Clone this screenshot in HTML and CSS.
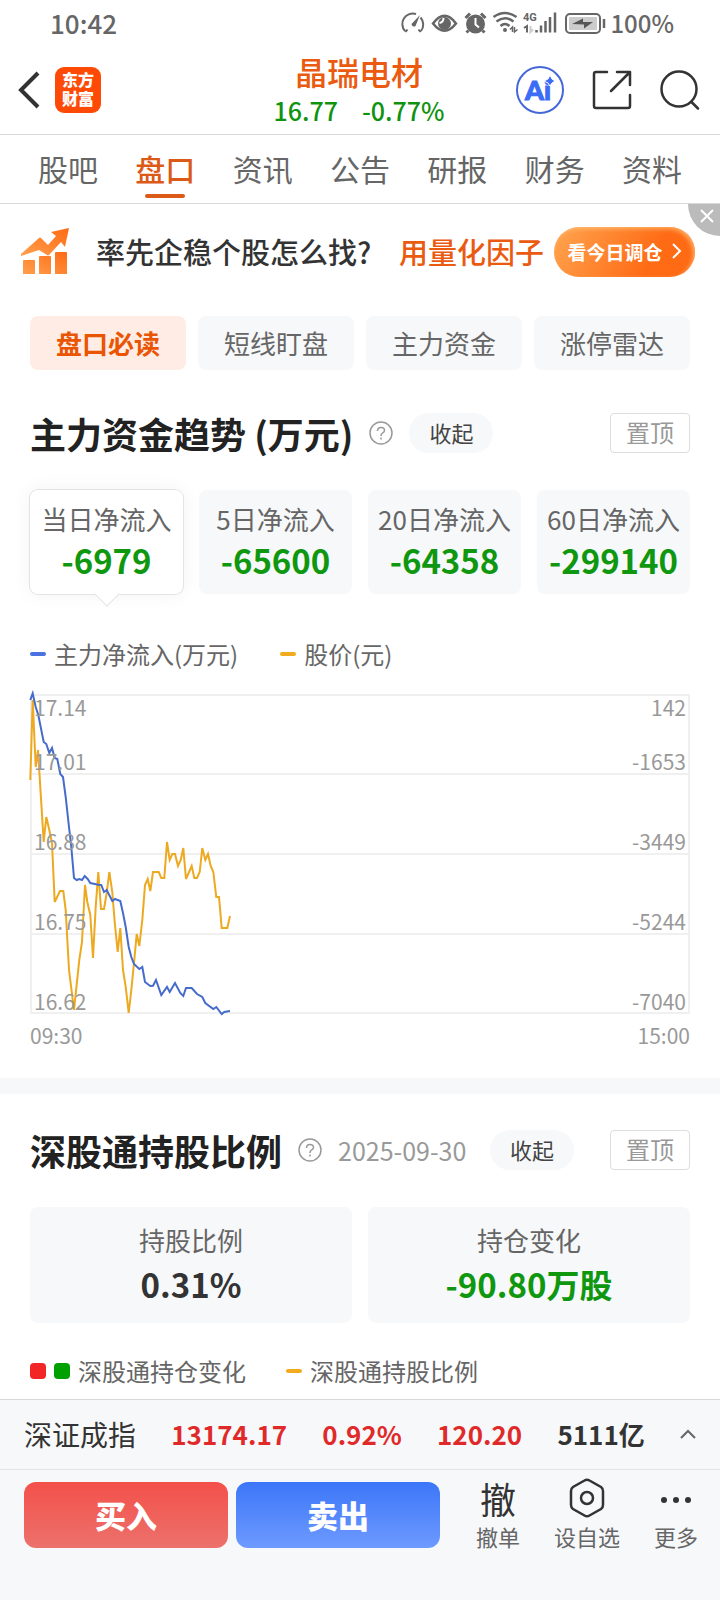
FILE: index.html
```html
<!DOCTYPE html>
<html lang="zh-CN">
<head>
<meta charset="utf-8">
<meta name="viewport" content="width=device-width">
<title>晶瑞电材 - 盘口</title>
<link rel="stylesheet" href="styles.css">
</head>

<body>

<div class="statusbar">
	<span>10:42</span>
	<div class="status-right">
		<svg width="206" height="24" viewBox="0 0 206 24" fill="none" stroke="#666" stroke-width="2">
			<!-- gauge -->
			<path d="M5.500 21 L7.500 18.500 M20.500 21 L18.500 18.500 M5 20 A10.500 10.500 0 0 1 16 3 M20.500 6.500 A10.500 10.500 0 0 1 21 20"/>
			<path d="M20 4 L15.500 15 A2.500 2.500 0 0 1 11.500 13 Z" fill="#666" stroke="none"/>
			<!-- eye -->
			<path d="M33 12.500 Q44.500 -3 56 12.500 Q44.500 27 33 12.500 Z" stroke-width="2.500"/>
			<circle cx="44.500" cy="12.500" r="6.500" fill="#666" stroke="none"/>
			<path d="M43.500 7 a5 5 0 0 1 -4 5" stroke="#fff"/>
			<!-- alarm -->
			<circle cx="75.500" cy="13" r="9.500" fill="#666" stroke="none"/>
			<path d="M65.500 7 L70 2.500 M81 2.500 L85.500 7 M68.500 19.500 L66.500 21.500 M82.500 19.500 L84.500 21.500" stroke-width="3"/>
			<path d="M75.500 7 V13.500 L79 16.500" stroke="#fff"/>
			<!-- wifi -->
			<path d="M93.500 6 Q105 -2 116.500 6 M96.500 10.500 Q105 4 113.500 10.500 M100.500 15 Q105 11 109.500 15" stroke-width="2.500"/>
			<circle cx="105" cy="19" r="2" fill="#666" stroke="none"/>
			<path d="M110 18.500 L112.500 16 V21 M114.500 16 V21 L117.500 18.500" stroke-width="1.500"/>
			<!-- mobile signal -->
			<text class="net-type" x="123" y="10">4G</text>
			<path d="M124 17 L127 15 V21.500"/>
			<path d="M130.500 15 V21 L133 18.500" stroke="#ccc"/>
			<path d="M136.500 19 V21.500 M141 14.500 V21.500 M145.500 10 V21.500 M150 6 V21.500 M155 1.500 V21.500" stroke-width="2.500"/>
			<!-- battery -->
			<rect x="166" y="3" width="34" height="19" rx="4"/>
			<rect x="169" y="6" width="28" height="13" rx="1" fill="#ccc" stroke="none"/>
			<path d="M172 13 L183 7.500 V11 H193 L184 17.500 V13.500 Z" fill="#555" stroke="none"/>
			<path d="M204 8 V17" stroke-width="2.500"/>
		</svg>
		<span>100%</span>
	</div>
</div>

<header class="header">
	<div class="header-left">
		<button type="button" class="icon-btn" aria-label="返回">
			<svg width="22" height="38" viewBox="0 0 22 38" fill="none" stroke="#333" stroke-width="4"><path d="M20 2 L3 19 L20 36"/></svg>
		</button>
		<a class="logo" href="#"><span>东方</span><span>财富</span></a>
	</div>
	<div class="stock">
		<h1>晶瑞电材</h1>
		<p><span>16.77</span><span>-0.77%</span></p>
	</div>
	<div class="header-right">
		<button type="button" class="icon-btn" aria-label="AI 助手">
			<svg width="48" height="48" viewBox="0 0 48 48">
				<circle cx="24" cy="24" r="23" fill="none" stroke="#4468d8" stroke-width="2"/>
				<text class="ai-text" x="9" y="34">Ai</text>
				<path d="M34 9 L36 13 L39 15 L36 17 L34 20 L32 17 L28 15 L32 13 Z" fill="#3b6cf6" stroke="#fff" stroke-width="1"/>
			</svg>
		</button>
		<button type="button" class="icon-btn" aria-label="分享">
			<svg width="40" height="40" viewBox="0 0 40 40" fill="none" stroke="#333" stroke-width="2.500" stroke-linecap="round" stroke-linejoin="round"><path d="M15 2 H4 Q2 2 2 4 V36 Q2 38 4 38 H36 Q38 38 38 36 V25 M25 2 H38 V15 M38 2 L19 21"/></svg>
		</button>
		<button type="button" class="icon-btn" aria-label="搜索">
			<svg width="40" height="40" viewBox="0 0 40 40" fill="none" stroke="#333" stroke-width="2.500" stroke-linecap="round"><circle cx="19" cy="19" r="17.500"/><path d="M31.500 32 L38 38.500"/></svg>
		</button>
	</div>
</header>

<nav class="tabs">
	<a href="#">股吧</a>
	<a href="#" class="active">盘口</a>
	<a href="#">资讯</a>
	<a href="#">公告</a>
	<a href="#">研报</a>
	<a href="#">财务</a>
	<a href="#">资料</a>
</nav>

<main>

<div class="banner">
	<svg width="50" height="48" viewBox="0 0 50 48">
		<defs><linearGradient id="rise" x1="0" y1="1" x2="1" y2="0"><stop offset="0" stop-color="#ffa04e"/><stop offset="1" stop-color="#ff6a14"/></linearGradient></defs>
		<path fill="url(#rise)" d="M1 26 L19 10 Q20 9 21 10 L28 17 L36 8 L31 4 L49 0 L45 19 L41 14 L29 27 Q28 28 27 27 L19 22 L1 28 Z"/>
		<path fill="url(#rise)" d="M4 32 H14 Q15 32 15 33 V46 H3 V33 Q3 32 4 32 Z M20 28 H30 Q31 28 31 29 V46 H19 V29 Q19 28 20 28 Z M36 24 H46 Q47 24 47 25 V46 H35 V25 Q35 24 36 24 Z"/>
	</svg>
	<p class="banner-text">率先企稳个股怎么找?</p>
	<p class="banner-text hot">用量化因子</p>
	<button type="button" class="banner-btn">看今日调仓
		<svg width="10" height="16" viewBox="0 0 10 16" fill="none" stroke="#fff" stroke-width="2"><path d="M1 1 L8 8 L1 15"/></svg>
	</button>
	<button type="button" class="banner-close" aria-label="关闭">
		<svg width="14" height="14" viewBox="0 0 14 14" stroke="#fff" stroke-width="2"><path d="M1 1 L13 13 M13 1 L1 13"/></svg>
	</button>
</div>

<div class="chips">
	<button type="button" class="active">盘口必读</button>
	<button type="button">短线盯盘</button>
	<button type="button">主力资金</button>
	<button type="button">涨停雷达</button>
</div>

<section class="block">
	<div class="block-head">
		<h2>主力资金趋势 (万元)</h2>
		<svg class="help" width="24" height="24" viewBox="0 0 24 24" fill="none" stroke="#999" stroke-width="1.500"><circle cx="12" cy="12" r="11"/><path d="M8.500 10 Q8.500 6.500 12 6.500 Q15.500 6.500 15.500 9.500 Q15.500 11 13.500 12.200 Q12 13 12 15 M12 16.500 V18.500"/></svg>
		<button type="button" class="pill">收起</button>
		<button type="button" class="pin">置顶</button>
	</div>

	<div class="flows">
		<button type="button" class="card active"><span>当日净流入</span><b class="down">-6979</b></button>
		<button type="button" class="card"><span>5日净流入</span><b class="down">-65600</b></button>
		<button type="button" class="card"><span>20日净流入</span><b class="down">-64358</b></button>
		<button type="button" class="card"><span>60日净流入</span><b class="down">-299140</b></button>
	</div>

	<div class="legend">
		<span><i class="dash blue"></i>主力净流入(万元)</span>
		<span><i class="dash amber"></i>股价(元)</span>
	</div>

	<svg class="chart" viewBox="0 0 660 358">
		<path class="grid" d="M1 5 H659 V323 H1 Z M1 84 H659 M1 164 H659 M1 244 H659"/>
		<polyline class="line amber" points="0.300,90 2.700,10 5.700,77 8,60 13.700,152 16.300,127 19.300,140 22,153 24.700,212 30,201 33.300,201 35.700,220 39,280 44,320 49.300,270 52,252 55,195 57.300,212 60.300,225 63,268 65.700,217 68.300,182 71,219 74,219 76.700,203 79.300,182 82.300,202 84.700,232 87.700,262 90.300,238 93,280 95.700,297 98.700,323 101.300,300 104,273 106.700,244 109.300,256 112.300,230 115,195 117.700,189 120.300,201 123,182 128.700,182 131.300,188 134.300,188 137,152 139.700,170 142.300,164 145,164 148,176 150.700,170 153.300,158 156,189 161.700,176 164.300,188 167,188 169.700,182 172.300,158 175.300,170 178,164 180.700,176 183.300,182 186.300,207 189,207 191.700,238 197.300,238 200,226"/>
		<polyline class="line blue" points="0.300,10 2.700,3.300 5.700,17 8.300,25 13.700,52 16.300,54 19.300,63 22,58 24.700,68 27.300,69 30.300,84 33,87 35.700,107 39,137 41.300,157 44,188 46.700,190 49.300,189 52,190 54.700,186 57.700,189 60.300,193 68.300,194.700 71.300,195 74,202 76.700,200 82.300,211 85,209 90.300,211 93,223 95.700,237 98.700,257 101.300,267 104,274 109.300,279 112.300,277 115,292 120.300,296 123,295.700 126,290 131.300,305 137,297 139.700,302 145,293 150.300,303 153.300,306 156,298 161.700,298 167,304 172.300,307 175.300,313 183.300,319 186.300,317 191.700,324 194.300,322 200,321"/>
		<g class="axis">
			<text x="4" y="26">17.14</text>
			<text x="4" y="80">17.01</text>
			<text x="4" y="160">16.88</text>
			<text x="4" y="240">16.75</text>
			<text x="4" y="320">16.62</text>
			<text x="0" y="354">09:30</text>
		</g>
		<g class="axis end">
			<text x="656" y="26">142</text>
			<text x="656" y="80">-1653</text>
			<text x="656" y="160">-3449</text>
			<text x="656" y="240">-5244</text>
			<text x="656" y="320">-7040</text>
			<text x="660" y="354">15:00</text>
		</g>
	</svg>
</section>

<section class="block last">
	<div class="block-head">
		<h2>深股通持股比例</h2>
		<svg class="help" width="24" height="24" viewBox="0 0 24 24" fill="none" stroke="#999" stroke-width="1.500"><circle cx="12" cy="12" r="11"/><path d="M8.500 10 Q8.500 6.500 12 6.500 Q15.500 6.500 15.500 9.500 Q15.500 11 13.500 12.200 Q12 13 12 15 M12 16.500 V18.500"/></svg>
		<time datetime="2025-09-30">2025-09-30</time>
		<button type="button" class="pill">收起</button>
		<button type="button" class="pin">置顶</button>
	</div>

	<div class="holdings">
		<div class="card"><span>持股比例</span><b>0.31%</b></div>
		<div class="card"><span>持仓变化</span><b class="down">-90.80万股</b></div>
	</div>

	<div class="legend wide">
		<span><i class="box red"></i><i class="box green"></i>深股通持仓变化</span>
		<span><i class="dash amber"></i>深股通持股比例</span>
	</div>
</section>

</main>

<footer class="footer">
	<div class="index-row">
		<span>深证成指</span>
		<b class="up">13174.17</b>
		<b class="up">0.92%</b>
		<b class="up">120.20</b>
		<b>5111亿</b>
		<svg width="16" height="10" viewBox="0 0 16 10" fill="none" stroke="#666" stroke-width="2"><path d="M1 9 L8 2 L15 9"/></svg>
	</div>
	<div class="trade-row">
		<button type="button" class="trade buy">买入</button>
		<button type="button" class="trade sell">卖出</button>
		<div class="tools">
			<button type="button" class="tool"><span class="glyph">撤</span>撤单</button>
			<button type="button" class="tool">
				<svg width="36" height="40" viewBox="0 0 36 40" fill="none" stroke="#333" stroke-width="2.500"><path d="M15.500 2.500 Q18 1 20.500 2.500 L32 9 Q34 10.500 34 13 V27 Q34 29.500 32 31 L20.500 37.500 Q18 39 15.500 37.500 L4 31 Q2 29.500 2 27 V13 Q2 10.500 4 9 Z"/><circle cx="18" cy="20" r="6"/></svg>
				设自选
			</button>
			<button type="button" class="tool">
				<svg width="36" height="40" viewBox="0 0 36 40" fill="#333"><circle cx="6" cy="22" r="3"/><circle cx="18" cy="22" r="3"/><circle cx="30" cy="22" r="3"/></svg>
				更多
			</button>
		</div>
	</div>
</footer>

</body>
</html>
```
FILE: styles.css
```css
* {
	box-sizing: border-box;
}

body {
	display: flex;
	flex-direction: column;
	min-height: 100vh;
	margin: 0;
	color: #333;
	font-family: "Noto Sans CJK SC", "Noto Sans", sans-serif;
	background: #fff;
}

h1, h2, p {
	margin: 0;
}

button {
	padding: 0;
	border: 0;
	color: inherit;
	font: inherit;
	background: none;
}

a {
	color: inherit;
	text-decoration: none;
}

svg {
	display: block;
	flex: none;
	overflow: visible;
}

main {
	flex: 1;
}

.up { color: #e02a2a; }
.down { color: #0f970f; }

/* status bar */

.statusbar {
	display: flex;
	align-items: center;
	justify-content: space-between;
	height: 46px;
	padding: 0 46px 0 50px;
	color: #666;
	font-size: 26px;
	font-weight: 500;
	line-height: 44px;
}

.status-right {
	display: flex;
	align-items: center;
	gap: 4px;
	font-size: 24px;
}

.net-type {
	fill: #666;
	stroke: none;
	font-family: Roboto, sans-serif;
	font-size: 11px;
	font-weight: bold;
}

/* header */

.header {
	display: grid;
	grid-template-columns: 1fr auto 1fr;
	align-items: center;
	height: 89px;
	padding: 0 20px 0 18px;
	border-bottom: 1px solid #d8d8d8;
}

.header-left {
	display: flex;
	align-items: center;
	gap: 15px;
}

.header-right {
	display: flex;
	align-items: center;
	justify-content: flex-end;
	gap: 28px;
}

.logo {
	display: flex;
	flex-direction: column;
	width: 46px;
	height: 46px;
	padding-top: 3px;
	border-radius: 9px;
	color: #fff;
	font-size: 16px;
	font-weight: 900;
	line-height: 19px;
	text-align: center;
	background: #ff4a05;
}

.stock {
	padding-top: 2px;
	text-align: center;
}

.stock h1 {
	color: #ea5a10;
	font-size: 32px;
	font-weight: 500;
	line-height: 38px;
}

.stock p {
	display: flex;
	justify-content: center;
	gap: 24px;
	color: #0f930f;
	font-size: 25px;
	font-weight: 500;
	line-height: 40px;
}

.ai-text {
	fill: #3b6cf6;
	stroke: #3b6cf6;
	stroke-width: 1px;
	font-family: Lato, sans-serif;
	font-size: 27px;
	font-weight: 900;
}

/* tabs */

.tabs {
	display: flex;
	justify-content: space-between;
	height: 69px;
	padding: 0 38px;
	border-bottom: 1px solid #d8d8d8;
	color: #666;
	font-size: 30px;
	line-height: 66px;
}

.tabs a {
	position: relative;
}

.tabs .active {
	color: #dc5a18;
	font-weight: 500;
}

.tabs .active::after {
	content: "";
	position: absolute;
	left: 10px;
	right: 10px;
	bottom: 5px;
	height: 4px;
	border-radius: 2px;
	background: #dc5a18;
}

/* banner */

.banner {
	position: relative;
	display: flex;
	align-items: center;
	height: 96px;
	padding: 0 25px 0 20px;
}

.banner-text {
	margin-left: 26px;
	padding-bottom: 2px;
	font-size: 29px;
	font-weight: 500;
	line-height: 40px;
	white-space: nowrap;
}

.banner-text.hot {
	margin-left: auto;
	color: #ea5a10;
}

.banner-btn {
	display: flex;
	align-items: center;
	justify-content: center;
	gap: 9px;
	width: 141px;
	height: 50px;
	margin-left: 10px;
	padding-bottom: 2px;
	border-radius: 25px;
	color: #fff;
	font-size: 19px;
	font-weight: bold;
	white-space: nowrap;
	background: linear-gradient(120deg, #ffa550, #ff6a14 70%);
	box-shadow: inset -2px 2px 4px rgba(255, 200, 130, 0.7);
}

.banner-close {
	position: absolute;
	top: 0;
	right: 0;
	width: 32px;
	height: 32px;
	padding: 0 0 8px 12px;
	border-radius: 0 0 0 32px;
	background: #bbb;
}

/* chips */

.chips {
	display: grid;
	grid-template-columns: repeat(4, 1fr);
	gap: 12px;
	padding: 16px 30px 0;
}

.chips button {
	height: 54px;
	padding-bottom: 2px;
	border-radius: 8px;
	color: #666;
	font-size: 26px;
	background: #f7f8fa;
}

.chips .active {
	color: #ea5504;
	font-weight: bold;
	background: #ffede5;
}

/* blocks */

.block {
	padding: 36px 30px 30px;
}

.block.last {
	padding: 29px 30px 10px;
	border-top: 16px solid #f7f8fa;
}

.block-head {
	display: flex;
	align-items: center;
	gap: 16px;
	height: 54px;
}

.block-head h2 {
	color: #222;
	font-size: 36px;
	font-weight: bold;
	line-height: 54px;
	white-space: nowrap;
}

.block-head time {
	min-width: 136px;
	color: #999;
	font-size: 25px;
}

.pill {
	width: 84px;
	height: 40px;
	padding-bottom: 2px;
	border-radius: 20px;
	font-size: 22px;
	color: #444;
	background: #f7f8fa;
}

.pin {
	width: 80px;
	height: 40px;
	margin-left: auto;
	padding-bottom: 2px;
	border: 1px solid #ddd;
	border-radius: 4px;
	color: #999;
	font-size: 24px;
	line-height: 36px;
}

.flows, .holdings {
	display: grid;
	grid-template-columns: repeat(4, 1fr);
	gap: 16px;
	margin-top: 30px;
}

.holdings {
	grid-template-columns: repeat(2, 1fr);
}

.card {
	position: relative;
	display: flex;
	flex-direction: column;
	align-items: center;
	height: 104px;
	padding-top: 11px;
	border-radius: 8px;
	background: #f7f8fa;
}

.card span {
	color: #666;
	font-size: 26px;
	line-height: 36px;
	white-space: nowrap;
}

.card b {
	font-size: 33px;
	line-height: 46px;
}

.flows .active {
	background: #fff;
	box-shadow: 0 0 0 1px #e4e4e4, 0 0 20px rgba(0, 0, 0, 0.06);
}

.flows .active::after {
	content: "";
	position: absolute;
	left: 50%;
	bottom: -9px;
	width: 17px;
	height: 17px;
	margin-left: -9px;
	border: solid #e4e4e4;
	border-width: 0 1px 1px 0;
	background: #fff;
	transform: rotate(45deg);
}

.holdings .card {
	gap: 3px;
	height: 116px;
	padding-top: 15px;
}

.legend {
	display: flex;
	gap: 42px;
	margin-top: 42px;
	color: #666;
	font-size: 24px;
	line-height: 36px;
}

.legend.wide {
	gap: 40px;
	margin-top: 30px;
}

.legend span {
	display: flex;
	align-items: center;
	gap: 8px;
}

.dash {
	width: 16px;
	height: 4px;
	border-radius: 2px;
}

.box {
	width: 16px;
	height: 16px;
	border-radius: 4px;
}

.dash.blue { background: #4a72e0; }
.dash.amber { background: #f2aa1e; }
.box.red { background: #f22626; }
.box.green { background: #00a000; }

/* chart */

.chart {
	width: 100%;
	margin-top: 18px;
}

.grid {
	fill: none;
	stroke: #f0f0f0;
	stroke-width: 2;
}

.line {
	fill: none;
	stroke-width: 2;
}

.line.amber { stroke: #eda91f; }
.line.blue { stroke: #466ccb; }

.axis {
	fill: #999;
	font-size: 21px;
}

.axis.end {
	text-anchor: end;
}

/* footer */

.footer {
	position: sticky;
	bottom: 0;
	border-top: 1px solid #d8d8d8;
	background: #f7f8fa;
}

.index-row {
	display: flex;
	align-items: center;
	justify-content: space-between;
	height: 70px;
	padding: 0 24px 2px;
	border-bottom: 1px solid #e4e4e4;
	font-size: 28px;
	white-space: nowrap;
}

.index-row b {
	font-size: 26px;
}

.trade-row {
	display: flex;
	gap: 8px;
	height: 130px;
	padding: 12px 22px 0 24px;
}

.trade {
	flex: 1;
	height: 66px;
	padding-bottom: 2px;
	border-radius: 12px;
	color: #fff;
	font-size: 31px;
	font-weight: 900;
}

.buy { background: linear-gradient(#f4504a, #ec716c); }
.sell { background: linear-gradient(#3c76f8, #6e9aff); }

.tools {
	display: flex;
	gap: 34px;
	margin-left: 28px;
}

.tool {
	display: flex;
	flex-direction: column;
	align-items: center;
	height: 74px;
	margin-top: -4px;
	color: #666;
	font-size: 22px;
	line-height: 36px;
}

.glyph {
	color: #333;
	font-size: 36px;
	line-height: 40px;
}
```
